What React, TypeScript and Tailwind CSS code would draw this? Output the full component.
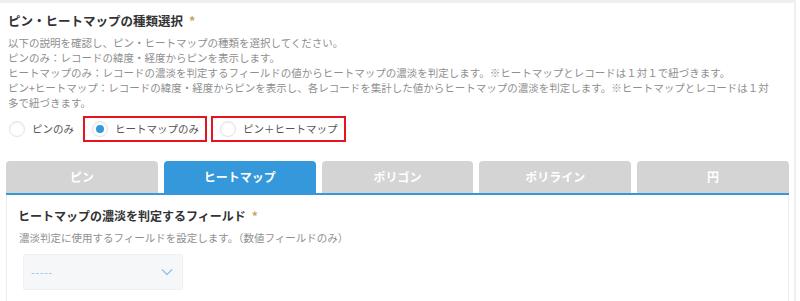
import { useState } from 'react';

const tabs = ['ピン', 'ヒートマップ', 'ポリゴン', 'ポリライン', '円'];

const radios = [
  { id: 'pin', label: 'ピンのみ', boxed: false },
  { id: 'heat', label: 'ヒートマップのみ', boxed: true },
  { id: 'both', label: 'ピン＋ヒートマップ', boxed: true },
];

function Radio({ checked }: { checked: boolean }) {
  return (
    <span className="w-[16px] h-[16px] rounded-full border border-[#e3e3e3] bg-white shadow-[inset_0_1px_2px_rgba(0,0,0,0.06)] flex items-center justify-center shrink-0">
      {checked && <span className="w-[8px] h-[8px] rounded-full bg-[#3498db]" />}
    </span>
  );
}

export default function App() {
  const [kind, setKind] = useState('heat');
  const [tab, setTab] = useState(1);

  return (
    <div
      className="w-[800px] h-[301px] overflow-hidden bg-white"
      style={{ fontFamily: '"Noto Sans CJK JP", "Noto Sans", sans-serif' }}
    >
      <div className="w-[796px] h-full border-t-[3px] border-r-[2px] border-[#efefef]">
        <div className="pl-[8px] pt-[9px]">
          <h3 className="text-[12.5px] leading-[18px] font-bold text-[#333]">
            ピン・ヒートマップの種類選択<span className="ml-[6px] text-[#c9a26a]">*</span>
          </h3>
          <div className="mt-[5px] text-[10.5px] leading-[15px] text-[#8f8f8f]">
            <p>以下の説明を確認し、ピン・ヒートマップの種類を選択してください。</p>
            <p>ピンのみ：レコードの緯度・経度からピンを表示します。</p>
            <p>ヒートマップのみ：レコードの濃淡を判定するフィールドの値からヒートマップの濃淡を判定します。※ヒートマップとレコードは１対１で紐づきます。</p>
            <p>
              ピン+ヒートマップ：レコードの緯度・経度からピンを表示し、各レコードを集計した値からヒートマップの濃淡を判定します。※ヒートマップとレコードは１対
              <br />
              多で紐づきます。
            </p>
          </div>
          <div className="mt-[6px] flex items-center">
            {radios.map((r) => (
              <button
                key={r.id}
                type="button"
                onClick={() => setKind(r.id)}
                className={`h-[26px] flex items-center gap-[7px] text-[10.5px] text-[#555] ${
                  r.boxed ? 'border-2 border-[#e5141e] pl-[7px] pr-[6px] mr-[4px]' : 'pl-[1px] pr-[9px]'
                }`}
              >
                <Radio checked={kind === r.id} />
                <span>{r.label}</span>
              </button>
            ))}
          </div>
        </div>

        <div className="mt-[19px] ml-[6px] mr-[5px]">
          <div className="flex gap-[6px] border-b-2 border-[#3498db]">
            {tabs.map((t, i) => (
              <button
                key={t}
                type="button"
                onClick={() => setTab(i)}
                className={`flex-1 h-[32px] rounded-t-[4px] text-[12px] font-bold text-white ${
                  tab === i ? 'bg-[#3498db]' : 'bg-[#d4d4d4]'
                }`}
              >
                {t}
              </button>
            ))}
          </div>
          <div className="h-[200px] border-l border-r border-[#ececec] px-[11px] pt-[12px]">
            <h4 className="text-[12px] leading-[18px] font-bold text-[#333]">
              ヒートマップの濃淡を判定するフィールド<span className="ml-[6px] text-[#c9a26a]">*</span>
            </h4>
            <p className="mt-[5px] ml-[1px] text-[10.5px] leading-[15px] text-[#8f8f8f]">
              濃淡判定に使用するフィールドを設定します。（数値フィールドのみ）
            </p>
            <div className="mt-[9px] ml-[5px] w-[160px] h-[36px] bg-[#f5f7f9] border border-[#eef0f2] rounded-[2px] flex items-center justify-between pl-[7px] pr-[9px]">
              <span className="text-[11px] leading-[14px] text-[#8ec5ee] tracking-[0.5px]">-----</span>
              <svg width="12" height="8" viewBox="0 0 12 8" fill="none">
                <path d="M1 1.5l5 5 5-5" stroke="#8ec5ee" strokeWidth="1.4" />
              </svg>
            </div>
          </div>
        </div>
      </div>
    </div>
  );
}
